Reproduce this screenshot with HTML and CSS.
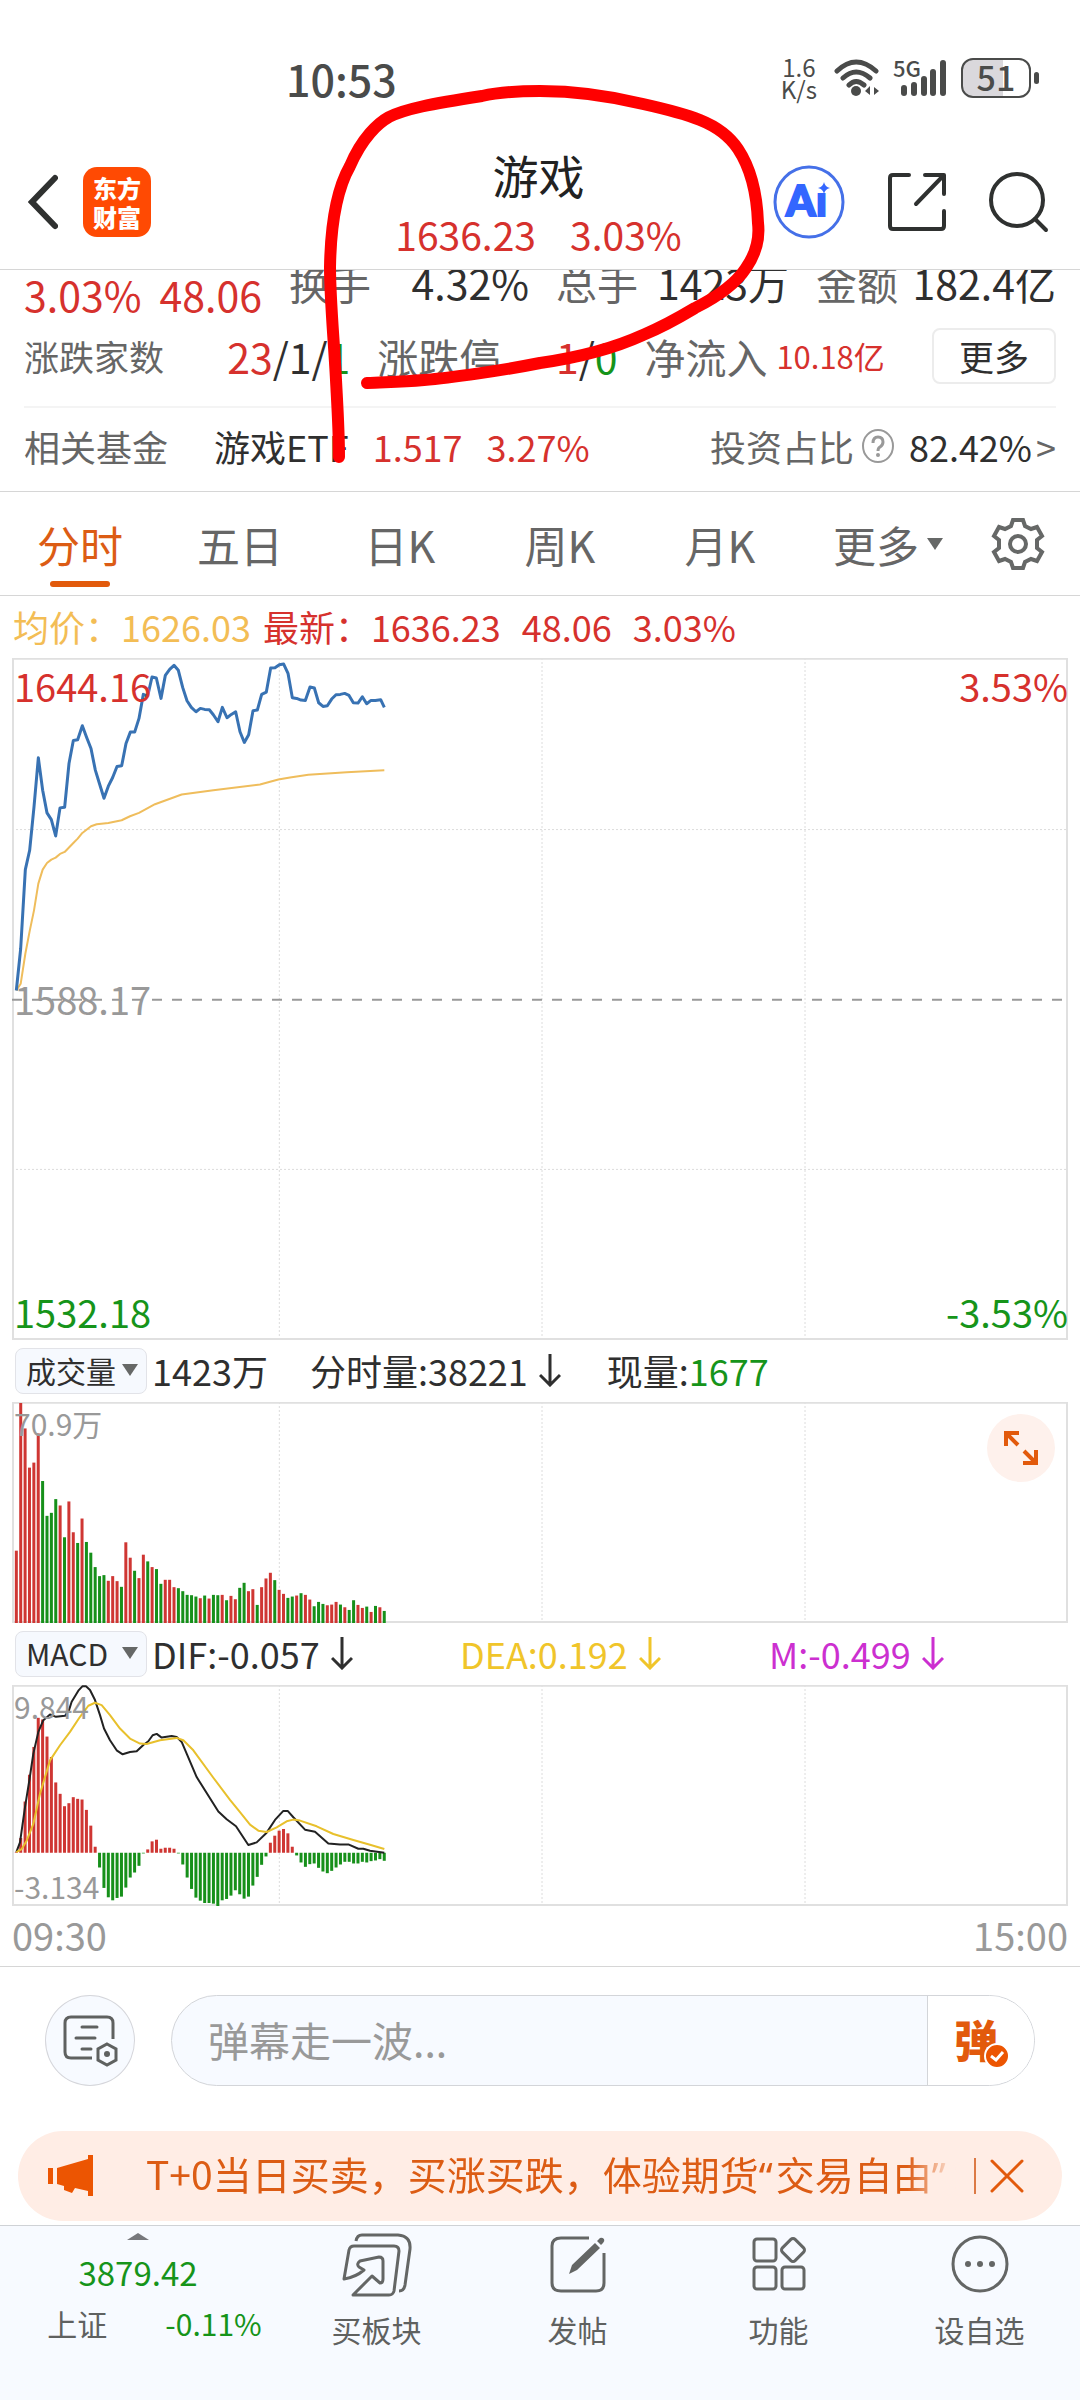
FILE: index.html
```html
<!DOCTYPE html>
<html lang="zh-CN">
<head>
<meta charset="utf-8">
<meta name="viewport" content="width=device-width, initial-scale=1">
<title>游戏 1636.23</title>
<link rel="stylesheet" href="styles.css">
</head>
<body>
<div class="app">
  <div class="status">
    <span class="clock">10:53</span>
    <span class="speed">1.6<br>K/s</span>
    <svg class="wifi" width="48" height="40" viewBox="0 0 48 40" fill="none" stroke="#4a4b4a" stroke-width="5" stroke-linecap="round">
      <path d="M4 13Q23-5 43 13M10 20Q23 8 37 20M16 27Q23 20 31 27"/>
      <circle cx="23" cy="33" r="5" fill="#4a4b4a" stroke="none"/>
      <path d="M32 33l5-5v9zM46 33l-5-4v8z" fill="#4a4b4a" stroke="none"/>
    </svg>
    <svg class="signal" width="56" height="40" viewBox="0 0 56 40" fill="#4a4b4a">
      <text x="0" y="19" class="g5">5G</text>
      <rect x="8" y="27" width="6" height="11" rx="3"/><rect x="18" y="24" width="6" height="14" rx="3"/><rect x="28" y="18" width="6" height="20" rx="3"/><rect x="37" y="11" width="6" height="27" rx="3"/><rect x="47" y="2" width="6" height="36" rx="3"/>
    </svg>
    <span class="battery">51</span><span class="nub"></span>
  </div>

  <header class="top">
    <div class="top-left">
      <button class="icon-btn" aria-label="返回"><svg width="30" height="56" viewBox="0 0 30 56" fill="none" stroke="#2f3130" stroke-width="6" stroke-linecap="round" stroke-linejoin="miter"><path d="M27 4L4 28L27 52"/></svg></button>
      <a class="logo" href="#">东方<br>财富</a>
    </div>
    <div class="title">
      <h1>游戏</h1>
      <p class="red"><span>1636.23</span><span>3.03%</span></p>
    </div>
    <div class="top-right">
      <button class="icon-btn" aria-label="AI"><svg width="72" height="74" viewBox="0 0 72 74"><ellipse cx="36" cy="37" rx="34" ry="35" fill="none" stroke="#4570e8" stroke-width="3"/><g fill="#3366ff" stroke="#3366ff" stroke-width="2"><text x="13" y="51" class="ai">A</text><text x="43" y="51" class="ai">ı</text><path d="M51 17q1 5 6 6q-5 1-6 6q-1-5-6-6q5-1 6-6z" stroke="none"/></g></svg></button>
      <button class="icon-btn" aria-label="分享"><svg width="58" height="60" viewBox="0 0 58 60" fill="none" stroke="#2f3130" stroke-width="4" stroke-linecap="round" stroke-linejoin="round"><path d="M21 3H5Q2 3 2 6V54Q2 57 5 57H53Q56 57 56 54V39M37 3H56V22M55 4L28 32"/></svg></button>
      <button class="icon-btn" aria-label="搜索"><svg width="60" height="62" viewBox="0 0 60 62" fill="none" stroke="#2f3130" stroke-width="4" stroke-linecap="round"><ellipse cx="28" cy="29" rx="26" ry="26"/><path d="M46 48L57 59"/></svg></button>
    </div>
  </header>

  <section class="stats">
    <div class="stat-row first">
      <div class="cell price red"><span>3.03%</span><span>48.06</span></div>
      <div class="cell"><span class="lab">换手</span><span>4.32%</span></div>
      <div class="cell"><span class="lab">总手</span><span>1423万</span></div>
      <div class="cell"><span class="lab">金额</span><span>182.4亿</span></div>
    </div>
    <div class="stat-row second">
      <div class="cell"><span class="lab small">涨跌家数</span><span><b class="red">23</b>/1/<b class="green">1</b></span></div>
      <div class="cell"><span class="lab">涨跌停</span><span><b class="red">1</b>/<b class="green">0</b></span></div>
      <div class="cell"><span class="lab">净流入</span><span class="flow red">10.18亿</span></div>
      <button class="more">更多</button>
    </div>
    <div class="fund">
      <span class="lab">相关基金</span>
      <a href="#" class="fund-link"><span>游戏ETF</span><span class="red">1.517</span><span class="red">3.27%</span></a>
      <a href="#" class="ratio"><span class="lab">投资占比</span><svg width="34" height="36" viewBox="0 0 34 36" fill="none" stroke="#999" stroke-width="2"><ellipse cx="17" cy="18" rx="15" ry="16"/><path d="M12 15Q12 9 17 9Q22 9 22 14Q22 17 19 19Q17 20 17 23" stroke-width="3"/><circle cx="17" cy="27" r="2" fill="#999" stroke="none"/></svg><span>82.42%</span><span class="lab gt">&gt;</span></a>
    </div>
  </section>

  <nav class="tabs">
    <button class="active">分时</button>
    <button>五日</button>
    <button>日K</button>
    <button>周K</button>
    <button>月K</button>
    <button>更多<i class="tri"></i></button>
    <button aria-label="设置"><svg width="54" height="54" viewBox="-27 -27 54 54" fill="none" stroke="#666867" stroke-width="4"><path d="M-5-24H5L7-18L13-15L19-17L24-8L19-4V4L24 8L19 17L13 15L7 18L5 24H-5L-7 18L-13 15L-19 17L-24 8L-19 4V-4L-24-8L-19-17L-13-15L-7-18Z"/><circle r="8"/></svg></button>
  </nav>

  <div class="quote"><span class="avg">均价：1626.03</span><span class="red latest"><span>最新：1636.23</span><span>48.06</span><span>3.03%</span></span></div>

  <section class="chart main-chart">
    <svg id="price" viewBox="36 204 3168 2043" preserveAspectRatio="none"></svg>
    <span class="tl red">1644.16</span><span class="tr red">3.53%</span>
    <span class="ml">1588.17</span>
    <span class="bl green">1532.18</span><span class="br green">-3.53%</span>
  </section>

  <div class="ind">
    <button class="pick">成交量<i class="tri"></i></button>
    <span class="v1">1423万</span>
    <span class="v2">分时量:38221<svg class="down" width="22" height="34" viewBox="0 0 22 34"><path d="M11 1V32M1 22L11 32L21 22"/></svg></span>
    <span>现量:<span class="green">1677</span></span>
  </div>
  <section class="chart sub-chart">
    <svg id="volume" viewBox="36 246 3168 660" preserveAspectRatio="none"></svg>
    <span class="tl">70.9万</span>
    <button class="expand" aria-label="展开"><svg width="36" height="36" viewBox="0 0 36 36" fill="none" stroke="#e25a0c" stroke-width="4"><path d="M3 16V3H16M4 4L15 15M33 20V33H20M32 32L21 21"/></svg></button>
  </section>

  <div class="ind macd">
    <button class="pick">MACD<i class="tri"></i></button>
    <span class="m1">DIF:-0.057<svg class="down" width="22" height="34" viewBox="0 0 22 34"><path d="M11 1V32M1 22L11 32L21 22"/></svg></span>
    <span class="m2">DEA:0.192<svg class="down" width="22" height="34" viewBox="0 0 22 34"><path d="M11 1V32M1 22L11 32L21 22"/></svg></span>
    <span class="m3">M:-0.499<svg class="down" width="22" height="34" viewBox="0 0 22 34"><path d="M11 1V32M1 22L11 32L21 22"/></svg></span>
  </div>
  <section class="chart sub-chart">
    <svg id="macd" viewBox="36 195 3168 660" preserveAspectRatio="none"></svg>
    <span class="tl">9.844</span><span class="bl">-3.134</span>
  </section>
  <div class="times"><span>09:30</span><span>15:00</span></div>

  <form class="danmu">
    <button type="button" class="round" aria-label="弹幕设置"><svg width="56" height="52" viewBox="0 0 56 52" fill="none" stroke="#5f6160" stroke-width="3"><path d="M30 43H9Q3 43 3 37V8Q3 2 9 2H45Q51 2 51 8V24" /><path d="M20 12H35M14 23H33M20 34H29" stroke-linecap="round"/><path d="M45 29L54 34V45L45 50L36 45V34Z"/><circle cx="45" cy="39" r="3" fill="#5f6160" stroke="none"/></svg></button>
    <div class="field">
      <input type="text" aria-label="弹幕" placeholder="弹幕走一波...">
      <button type="button" class="dan">弹<svg width="26" height="26" viewBox="0 0 26 26"><circle cx="13" cy="13" r="12" fill="#ec5502" stroke="#fff" stroke-width="2"/><path d="M7 13L12 17L19 9" fill="none" stroke="#fff" stroke-width="3"/></svg></button>
    </div>
  </form>

  <div class="banner">
    <svg width="46" height="42" viewBox="0 0 46 42" fill="#ec5502"><path d="M0 13H5V29H0ZM9 13L40 4V0H45V41H40V36L27 33L24 38L16 35V31L9 29Z"/></svg>
    <a href="#">T+0当日买卖，买涨买跌，体验期货<span class="q">“</span>交易自由<span class="q">”</span>：</a>
    <button aria-label="关闭"><svg width="34" height="34" viewBox="0 0 34 34" fill="none" stroke="#e25a0c" stroke-width="3" stroke-linecap="round"><path d="M2 2L32 32M32 2L2 32"/></svg></button>
  </div>

  <nav class="bottom">
    <a href="#" class="index"><i class="up"></i><strong>3879.42</strong><span><em>上证</em><b class="green">-0.11%</b></span></a>
    <a href="#"><svg width="70" height="64" viewBox="0 0 70 64" fill="none" stroke="#646665" stroke-width="3" stroke-linejoin="round"><path d="M14 8Q15 2 20 2H56Q69 3 68 16L63 52Q62 58 57 58"/><path d="M2 46L7 17Q8 13 12 13H52Q57 13 57 18L52 58Q51 62 47 62H11L30 43L38 50Q41 50 41 46V28Q41 24 37 24L18 28Q14 31 17 34L22 37Q14 44 2 46Z"/></svg>买板块</a>
    <a href="#"><svg width="56" height="64" viewBox="0 0 56 64" fill="none" stroke="#646665" stroke-width="3"><path d="M39 5H11Q2 5 2 13V50Q2 58 11 58H46Q54 58 54 50V20"/><path d="M19 41L22 32L45 10L50 15L27 37ZM47 8L50 5Q52 4 54 6Q55 8 53 10L51 12Z" fill="#646665" stroke="none"/></svg>发帖</a>
    <a href="#"><svg width="56" height="64" viewBox="0 0 56 64" fill="none" stroke="#646665" stroke-width="3"><rect x="3" y="6" width="22" height="22" rx="3"/><rect x="3" y="34" width="22" height="22" rx="3"/><rect x="31" y="34" width="22" height="22" rx="3"/><rect x="33" y="8" width="18" height="18" rx="3" transform="rotate(45 42 17)"/></svg>功能</a>
    <a href="#"><svg width="58" height="64" viewBox="0 0 58 64" fill="none" stroke="#646665" stroke-width="3"><circle cx="29" cy="31" r="27"/><g fill="#646665" stroke="none"><circle cx="17" cy="31" r="3"/><circle cx="29" cy="31" r="3"/><circle cx="41" cy="31" r="3"/></g></svg>设自选</a>
  </nav>

  <svg class="ink" viewBox="0 0 1080 2400" aria-hidden="true"><path d="M339 457C339 430 337 400 336 380C334 340 330 300 330 267C331 210 342 180 350 166C362 138 378 123 389 117C405 109 430 104 482 96C500 92 520 91 540 91C575 91 610 96 643 104C670 110 685 114 700 120C720 128 732 140 738 149C752 170 757 195 758 223C760 240 755 255 746 268C735 285 715 298 695 308C675 320 655 330 643 335C610 350 575 358 540 363C505 370 450 378 424 380C400 382 385 382 367 383" fill="none" stroke="#ff0000" stroke-width="12" stroke-linecap="round" stroke-linejoin="round"/></svg>
</div>
<script src="chart.js"></script>
</body>
</html>
```
FILE: styles.css
```css
* { box-sizing: border-box; margin: 0; padding: 0; }
body { background: #fff; }
.app {
  position: relative;
  display: flex; flex-direction: column;
  min-height: 100vh;
  font-family: "Noto Sans CJK SC", "Noto Sans", sans-serif;
  font-size: 36px; line-height: 56px; color: #2f2f2f; white-space: nowrap;
  overflow: hidden;
}
button, input { font: inherit; color: inherit; background: none; border: 0; }
button, a { display: flex; align-items: center; }
a { color: inherit; text-decoration: none; }
svg { display: block; flex: none; }
b, em, strong, i { font-weight: inherit; font-style: normal; }
.red { color: #d6312d; }
.green { color: #16941a; }
.lab { color: #666; }
.tri { border: 8px solid transparent; border-top: 12px solid #666867; border-bottom: 0; }

.status { display: flex; align-items: center; padding: 50px 41px 0 286px; height: 106px; color: #4a4b4a; }
.clock { font-size: 43px; font-weight: 500; margin-right: auto; }
.speed { font-size: 24px; line-height: 22px; text-align: center; margin-right: 16px; }
.wifi { margin-right: 12px; }
.signal { margin-right: 12px; }
.g5 { font-size: 22px; font-weight: 500; }
.battery { width: 70px; height: 40px; border: 2px solid #4a4b4a; border-radius: 12px; font-size: 34px; line-height: 34px; font-weight: 500; text-align: center; background: linear-gradient(to right, #dad8dc 60%, #fff 60%); }
.nub { width: 5px; height: 12px; margin-left: 3px; border-radius: 3px; background: #4a4b4a; }

.top { display: grid; grid-template-columns: 1fr auto 1fr; align-items: center; padding: 38px 31px 9px 28px; border-bottom: 1px solid #d6d6d6; }
.top-left, .top-right { display: flex; align-items: center; }
.top-left { gap: 25px; }
.top-right { gap: 43px; justify-content: flex-end; }
.logo { width: 68px; height: 70px; border-radius: 14px; justify-content: center; background: #ff4a03; color: #fff; font-size: 24px; line-height: 29px; font-weight: 900; }
.title { text-align: center; }
.title h1 { font-size: 46px; line-height: 60px; font-weight: 400; color: #222; }
.title p { display: flex; gap: 34px; font-size: 39px; line-height: 60px; }
.ai { font-family: Lato, sans-serif; font-size: 42px; font-weight: 900; }
.title { height: 116px; }

.stats { overflow: hidden; padding: 0 24px 7px; border-bottom: 1px solid #d6d6d6; }
.stat-row { display: grid; gap: 27px; font-size: 41px; }
.cell { display: flex; justify-content: space-between; min-width: 0; }
.first { grid-template-columns: 238fr 240fr 233fr 240fr; height: 56px; margin: -16px 0 18px; }
.price { line-height: 80px; }
.second { grid-template-columns: 326fr 240fr 240fr 144fr; padding-bottom: 22px; border-bottom: 2px solid #f4f4f4; height: 80px; }
.small { font-size: 35px; }
.flow { font-size: 31px; }
.more { justify-content: center; margin-left: 20px; font-size: 35px; line-height: 50px; border: 2px solid #ececec; border-radius: 8px; }
.fund { display: flex; justify-content: space-between; line-height: 76px; }
.fund-link { display: flex; gap: 24px; margin: 0 auto 0 46px; }
.ratio svg { margin: 0 14px 0 7px; }
.gt { margin-left: 4px; }

.tabs { display: grid; grid-template-columns: repeat(5, 160fr) 176fr 84fr; padding-right: 20px; height: 104px; border-bottom: 1px solid #d6d6d6; font-size: 43px; color: #666; }
.tabs button { justify-content: center; position: relative; }
.tabs .tri { margin-left: 8px; }
.tabs .active { color: #dc5c14; }
.tabs .active::after { content: ""; position: absolute; left: 50%; bottom: 8px; width: 60px; height: 6px; margin-left: -30px; border-radius: 3px; background: #e25a0c; }

.quote { display: flex; gap: 12px; padding-left: 13px; line-height: 61px; height: 62px; }
.avg { color: #f3bd55; }
.latest { display: flex; gap: 21px; }

.chart { position: relative; margin: 0 12px; color: #999; }
.chart > svg { width: 100%; height: 100%; }
.main-chart { height: 682px; font-size: 38px; }
.sub-chart { height: 221px; font-size: 30px; }
.chart span { position: absolute; line-height: 56px; }
.tl { left: 2px; top: 0; }
.tr { right: 0; top: 0; }
.ml { left: 2px; top: 50%; margin-top: -28px; }
.bl { left: 2px; bottom: 0; }
.br { right: 0; bottom: 0; }
.sub-chart .tl { top: -7px; }
.sub-chart .bl { bottom: -8px; }
.expand { position: absolute; right: 13px; top: 12px; width: 68px; height: 68px; border-radius: 50%; background: #fef1ec; justify-content: center; }

.ind { display: flex; align-items: center; height: 62px; padding-left: 15px; }
.ind > span { display: flex; align-items: center; padding-bottom: 2px; }
.pick { width: 132px; height: 46px; margin-right: 5px; padding: 0 8px 2px 10px; justify-content: space-between; font-size: 30px; background: #f6f9fe; border: 1px solid #e2e3e8; border-radius: 8px; }
.v1 { margin-right: 42px; }
.v2 { margin-right: 46px; }
.down { fill: none; stroke: currentColor; stroke-width: 3; margin-left: 11px; }
.m1 { width: 308px; }
.m2 { width: 309px; color: #f0c52a; }
.m3 { color: #cc2fd0; }

.times { display: flex; justify-content: space-between; padding: 1px 12px 4px; height: 61px; font-size: 38px; color: #999; border-bottom: 1px solid #d6d6d6; }

.danmu { display: flex; gap: 36px; padding: 28px 45px 45px; }
.round { width: 90px; height: 91px; border: 1px solid #d5d6db; border-radius: 50%; background: #f7faff; justify-content: center; }
.field { flex: 1; display: flex; height: 91px; border: 1px solid #d3d5d9; border-radius: 46px; overflow: hidden; background: #f7faff; }
.field input { flex: 1; min-width: 0; padding: 0 0 4px 36px; font-size: 41px; }
.field input::placeholder { color: #999; opacity: 1; }
.dan { position: relative; width: 107px; border-left: 1px solid #d3d5d9; background: #fff; padding: 0 0 4px 26px; color: #e25a0c; font-size: 44px; font-weight: 900; }
.dan svg { position: absolute; left: 56px; top: 47px; }

.banner { display: flex; align-items: center; height: 90px; margin: 0 18px 4px; padding: 0 38px 0 30px; border-radius: 45px; background: #ffede5; color: #dc5c14; }
.banner a { flex: 1; min-width: 0; display: block; margin: 0 18px 0 52px; padding-bottom: 4px; font-size: 39px; overflow: hidden; -webkit-mask-image: linear-gradient(to right, #000 94%, transparent); mask-image: linear-gradient(to right, #000 94%, transparent); }
.q { font-family: "Noto Sans", sans-serif; padding-right: 3px; }
.banner button { height: 36px; padding-left: 14px; border-left: 2px solid #dc7a45; }

.bottom { flex: 1; display: grid; grid-template-columns: 276fr repeat(4, 201fr); border-top: 1px solid #cfd2d6; background: #f7faff; font-size: 30px; line-height: 44px; color: #5f6160; }
.bottom a { flex-direction: column; justify-content: flex-start; padding-top: 7px; gap: 10px; }
.bottom .index { gap: 2px; }
.up { border: 11px solid transparent; border-bottom: 7px solid #77787c; border-top: 0; }
.index strong { margin-top: 8px; font-size: 33px; color: #16941a; }
.index > span { display: flex; gap: 58px; margin-top: 5px; padding-left: 33px; }

.ink { position: absolute; left: 0; top: 0; width: 100%; height: auto; pointer-events: none; }
```
FILE: chart.js
```js
// Chart coordinates: three units per pixel, one sample per minute.
const STEP = 13.14, X0 = 49, RED = '#cf3633', GREEN = '#16901a';

const grid = (top, bottom) => [838, 1626, 2415].map(x =>
  `<path d="M${x} ${top}V${bottom}" stroke="#dcdcdc" stroke-width="1" stroke-dasharray="2 2" vector-effect="non-scaling-stroke"/>`).join('');
const frame = (top, bottom) =>
  `<path d="M39 ${top + 2}H3201V${bottom - 3}H39Z" fill="none" stroke="#e0e0e0" stroke-width="2" vector-effect="non-scaling-stroke"/>`;
const line = (points, color, width) =>
  `<polyline points="${points}" fill="none" stroke="${color}" stroke-width="${width}" stroke-linejoin="round" vector-effect="non-scaling-stroke"/>`;
const bar = (i, y1, y2, color) =>
  `<rect x="${X0 - 4.5 + i * STEP}" y="${Math.min(y1, y2)}" width="9" height="${Math.max(2, Math.abs(y2 - y1))}" fill="${color}"/>`;

const price = '49,1200 62,1075 76,838 89,780 102,650 115,503 128,600 141,668 154,688 167,737 180,653 194,651 207,520 220,451 233,449 247,407 260,442 273,475 286,540 299,582 312,624 325,588 338,562 351,529 365,527 378,460 391,426 404,426 417,385 430,313 443,318 456,261 469,264 483,325 496,256 509,238 522,226 535,241 548,292 561,332 574,352 588,365 601,355 614,358 628,359 640,374 654,395 667,352 681,383 694,373 707,365 720,425 733,457 746,434 759,362 772,360 785,313 799,306 812,234 825,233 838,224 851,222 864,250 877,323 890,325 903,330 916,331 930,291 943,294 956,338 969,349 982,347 995,327 1008,314 1021,313 1034,310 1047,316 1060,338 1074,339 1087,320 1100,341 1113,331 1126,331 1142,329 1153,352';
const average = '49,1200 62,1180 76,1090 89,1022 102,960 115,880 128,838 141,818 154,808 167,802 180,791 194,785 220,758 233,745 247,728 273,708 290,702 325,698 365,690 390,678 417,668 465,642 545,613 640,600 780,583 835,568 870,562 925,554 1040,546 1153,540';
document.getElementById('price').innerHTML = grid(204, 2247) +
  [718, 1736].map(y => `<path d="M36 ${y}H3204" stroke="#dcdcdc" stroke-width="1" stroke-dasharray="2 2" vector-effect="non-scaling-stroke"/>`).join('') +
  frame(204, 2247) +
  '<path d="M36 1228H3204" stroke="#999" stroke-width="2" stroke-dasharray="10 10" vector-effect="non-scaling-stroke"/>' +
  line(average, '#efbd5c', 2) + line(price, '#3872b3', 3);

const volume = '690r 249r 325r 442r 427r 340r 482g 586g 577g 536g 555r 650g 543r 635r 667g 594r 664g 696g 739g 766g 763g 780r 766r 781r 798g 665r 711r 750g 772r 702r 722g 739r 745g 789g 777r 777r 799r 802g 811g 822g 823g 827g 832r 824g 833r 822g 823g 822r 838g 825r 835r 801g 786g 811r 805r 852g 799r 773r 756r 778g 807r 819r 831g 827g 824r 817g 822r 836r 856g 843g 849g 853r 851r 843r 851g 859r 867g 838g 852r 861r 857g 873r 855g 859r 870g';
document.getElementById('volume').innerHTML = grid(246, 906) + frame(246, 906) +
  volume.split(' ').map((v, i) => bar(i, parseInt(v), 906, v.endsWith('r') ? RED : GREEN)).join('');

const hist = [694,652,543,463,380,293,298,349,410,486,520,557,548,530,535,537,568,615,678,740,801,829,838,831,827,800,770,755,735,697,686,662,657,684,681,681,684,697,731,770,804,830,839,846,846,848,855,838,834,824,808,820,833,827,794,768,732,707,666,645,630,625,638,678,704,725,738,730,728,741,752,757,750,740,731,723,723,728,728,723,725,721,719,715,720];
const dif = '49,694 60,665 75,560 88,480 100,400 115,335 130,300 150,283 168,290 195,287 207,270 215,245 235,212 247,199 258,199 270,210 285,240 300,285 312,325 330,360 350,390 368,402 390,395 410,393 430,374 445,363 458,345 470,341 485,352 515,347 530,350 545,365 590,470 655,573 680,596 708,617 745,673 770,665 800,636 825,598 850,571 863,571 880,590 915,627 945,633 985,668 1020,671 1045,671 1075,684 1090,684 1110,690 1153,696';
const dea = '49,694 65,685 80,660 100,610 120,520 150,420 180,375 210,335 240,290 265,257 285,248 305,255 330,285 360,325 390,355 420,370 440,371 480,360 530,353 550,360 580,390 640,472 690,538 720,575 750,612 775,630 800,634 830,620 860,602 880,597 900,600 950,617 1000,640 1060,658 1110,672 1153,685';
document.getElementById('macd').innerHTML = grid(195, 855) + frame(195, 855) +
  hist.map((y, i) => bar(i, y, 696, y < 696 ? RED : GREEN)).join('') +
  line(dif, '#222', 2) + line(dea, '#e8c02c', 2);
```
